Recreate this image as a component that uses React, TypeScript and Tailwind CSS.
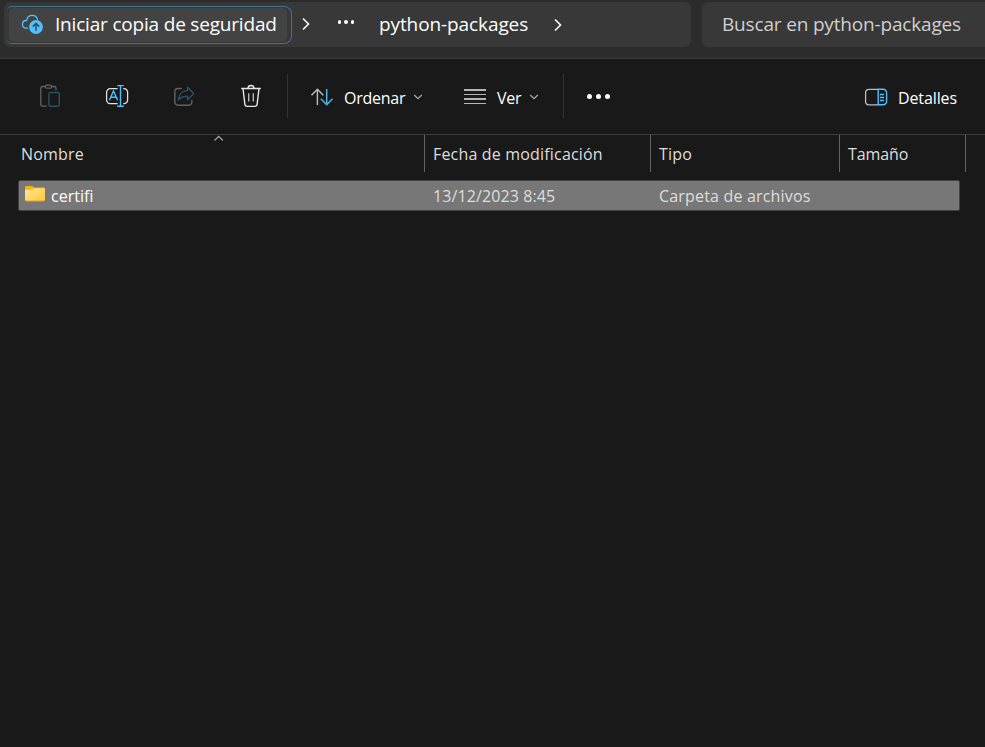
import React from "react";

function BackupIcon() {
  return (
    <svg width="26" height="24" viewBox="20 12 26 24" fill="none" className="-mt-0.5 block">
      <path d="M27.5 28.2H26a3.9 3.9 0 0 1-.4-7.7h1.1c.4-3.1 2.6-5.2 5.5-5.2 2.6 0 4.7 1.6 5.3 4" stroke="#4cc2ff" strokeWidth="1.3" strokeLinecap="round" />
      <circle cx="36" cy="27" r="6.9" fill="#4cc2ff" />
      <path d="M36 30.8v-7.2M32.8 26.6l3.2-3.2 3.2 3.2" stroke="#3b4a55" strokeWidth="1.5" />
    </svg>
  );
}

function Chevron() {
  return (
    <svg width="10" height="14" viewBox="0 0 10 14" fill="none" className="block">
      <path d="M2 1.5 7.5 7 2 12.5" stroke="#f4f4f4" strokeWidth="1.7" />
    </svg>
  );
}

function Down() {
  return (
    <svg width="10" height="8" viewBox="0 0 10 8" fill="none" className="mt-0.5 block">
      <path d="M1.2 2 5 5.6 8.8 2" stroke="#a8a8a8" strokeWidth="1.3" />
    </svg>
  );
}

function PasteIcon() {
  return (
    <svg width="28" height="28" viewBox="36 82 28 28" fill="none" className="block">
      <path d="M46.6 106.2h-4.1a1.7 1.7 0 0 1-1.7-1.7V88.2c0-1 .7-1.7 1.7-1.7h2.8M51.8 86.5h2.5c1 0 1.7.7 1.7 1.7v2" stroke="#636363" strokeWidth="1.3" />
      <rect x="45.2" y="85.2" width="6.6" height="3" rx="1.5" stroke="#636363" strokeWidth="1.2" />
      <rect x="48.9" y="92.5" width="10.4" height="13.7" rx="1.7" stroke="#285467" strokeWidth="1.4" />
    </svg>
  );
}

function RenameIcon() {
  return (
    <svg width="28" height="28" viewBox="103 82 28 28" fill="none" className="block">
      <path d="M117.6 88.6h-7.3a3.7 3.7 0 0 0-3.7 3.7v7.6a3.7 3.7 0 0 0 3.7 3.7h7.3M123.2 88.6h.8a3.6 3.6 0 0 1 3.6 3.7v7.6a3.6 3.6 0 0 1-3.6 3.7h-.8" stroke="#e0e0e0" strokeWidth="1.3" />
      <path d="M109.4 100.3 113.5 91l4.1 9.3M110.8 97.2h5.4M117.2 85.6h6.6M117.2 106.3h6.6M120.5 85.6v20.7" stroke="#4cc2ff" strokeWidth="1.4" />
    </svg>
  );
}

function ShareIcon() {
  return (
    <svg width="28" height="28" viewBox="170 82 28 28" fill="none" className="block">
      <path d="M181.2 88.5H178a3.2 3.2 0 0 0-3.2 3.2v10.4a3.2 3.2 0 0 0 3.2 3.2h10.7a3.2 3.2 0 0 0 3.2-3.2v-1.6" stroke="#636363" strokeWidth="1.4" strokeLinecap="round" />
      <path d="m187.6 87.2 6.1 6.3-6.1 6.3v-3.6c-4-.1-6.8 1-9.2 3.7.3-5.1 3.6-9.1 9.2-9.3v-3.4Z" stroke="#285467" strokeWidth="1.4" strokeLinejoin="round" />
    </svg>
  );
}

function TrashIcon() {
  return (
    <svg width="28" height="28" viewBox="237 82 28 28" fill="none" className="block">
      <path d="M241.2 88.5h19.6M243 88.6l1.9 15.7c.1 1.3 1.1 2.1 2.4 2.1h7.4c1.3 0 2.3-.8 2.4-2.1l1.9-15.7M248 88.3c.1-1.7 1.2-2.8 3-2.8s2.9 1.1 3 2.8" stroke="#e6e6e6" strokeWidth="1.4" />
      <path d="M248.7 93.2v8.3M253.3 93.2v8.3" stroke="#b8b8b8" strokeWidth="1.4" />
    </svg>
  );
}

function SortIcon() {
  return (
    <svg width="26" height="22" viewBox="309 86 26 22" fill="none" className="mt-px block">
      <path d="M317.4 105V89.6M311.5 95.3l5.9-6 5.9 6" stroke="#bdbdbd" strokeWidth="1.4" />
      <path d="M326.7 89v15.4M320.8 98.8l5.9 6 5.9-6" stroke="#4cb4e8" strokeWidth="1.5" />
    </svg>
  );
}

function DetailsIcon() {
  return (
    <svg width="24" height="20" viewBox="864 87 24 20" fill="none" className="mt-px block">
      <path d="M878 89.3h-9a3.4 3.4 0 0 0-3.4 3.4v8.7a3.4 3.4 0 0 0 3.4 3.4h9" stroke="#bdbdbd" strokeWidth="1.3" />
      <path d="M878.2 89.3h5a3.4 3.4 0 0 1 3.4 3.4v8.7a3.4 3.4 0 0 1-3.4 3.4h-5ZM880 94.5h4M880 97.5h4M880 100.5h4" stroke="#4cc2ff" strokeWidth="1.4" />
    </svg>
  );
}

function FolderIcon() {
  return (
    <svg width="20" height="18" viewBox="0 0 20 18" className="-mt-1 block">
      <defs>
        <linearGradient id="folder" x1="0" y1="0" x2="1" y2="1">
          <stop offset="0" stopColor="#ffe69b" />
          <stop offset="1" stopColor="#ffc937" />
        </linearGradient>
      </defs>
      <path d="M0 2.5C0 1.5.6 1 1.5 1h5c.6 0 1 .1 1.4.5L9 2.5h9.5c1 0 1.5.6 1.5 1.5v9H0Z" fill="#f5b316" />
      <path d="M0 6c0-.8.5-1.2 1.3-1.2h5.2c.7 0 1.1-.2 1.6-.7l.8-.8h9.6c.9 0 1.5.5 1.5 1.3v10.2c0 .9-.6 1.4-1.5 1.4h-17C.6 16.2 0 15.7 0 14.8Z" fill="url(#folder)" />
      <path d="M.4 15.4c.3.4.7.5 1.2.5h16.8c.5 0 .9-.1 1.2-.5" stroke="#d89b27" strokeWidth=".7" fill="none" />
    </svg>
  );
}

function AddressBar() {
  return (
    <header className="flex h-[59px] border-b border-[#3d3d3d] bg-[#2c2c2c] pl-1 pt-0.5 text-[19px] leading-[45px] text-white">
      <nav className="flex h-[45px] w-[687px] rounded-md bg-[#383838] pl-[3px] pt-1">
        <div className="h-[38px] w-[285px] rounded-r-lg rounded-l-[5px] border-[1.5px] border-l-0 border-[#3f738e] py-px pl-0.5 pr-1">
          <div className="flex h-[34px] items-center rounded-[5px] bg-[#434343] pl-[11px]">
            <BackupIcon />
            <span className="-mt-0.5 ml-[9px] whitespace-nowrap tracking-[-0.19px]">Iniciar copia de seguridad</span>
          </div>
        </div>
        <div className="ml-[8.5px] mt-[11px] w-[36.5px]"><Chevron /></div>
        <div className="mt-3.5 flex w-[42px] gap-[3px] pl-[0.5px]">
          <i className="size-[3.5px] rounded-full bg-white" />
          <i className="size-[3.5px] rounded-full bg-white" />
          <i className="size-[3.5px] rounded-full bg-white" />
        </div>
        <span className="-mt-1 w-[174px] whitespace-nowrap tracking-[-0.1px]">python-packages</span>
        <div className="mt-[12px]"><Chevron /></div>
      </nav>
      <div className="ml-[11px] h-[45px] grow overflow-hidden whitespace-nowrap rounded-l-md bg-[#383838] pl-5 tracking-[-0.17px] text-[#cfcfcf]">Buscar en python-packages</div>
    </header>
  );
}

function Toolbar() {
  return (
    <div className="flex h-[76px] items-center border-b border-[#3c3c3c] pb-px pl-9 text-[16px] text-white">
      <div className="flex gap-[39px]">
        <PasteIcon />
        <RenameIcon />
        <ShareIcon />
        <TrashIcon />
      </div>
      <div className="ml-[22px] h-[44px] w-px bg-[#333]" />
      <div className="ml-[21px] flex w-[154px] items-center">
        <SortIcon />
        <span className="ml-[9px] w-[69px] pt-1 tracking-[-0.25px]">Ordenar</span>
        <Down />
      </div>
      <div className="flex w-[100px] items-center pl-px">
        <div className="mt-px flex w-[22px] flex-col gap-[3px]">
          <i className="h-[1.5px] bg-[#b5b5b5]" />
          <i className="h-[1.5px] bg-[#b5b5b5]" />
          <i className="h-[1.5px] bg-[#b5b5b5]" />
          <i className="h-[1.5px] bg-[#b5b5b5]" />
        </div>
        <span className="ml-[11px] w-8 pt-1 tracking-[-0.2px]">Ver</span>
        <Down />
      </div>
      <div className="h-[44px] w-px bg-[#333]" />
      <div className="ml-[22.5px] flex gap-1">
        <i className="size-[5px] rounded-full bg-white" />
        <i className="size-[5px] rounded-full bg-white" />
        <i className="size-[5px] rounded-full bg-white" />
      </div>
      <div className="ml-auto flex w-[121px] items-center">
        <DetailsIcon />
        <span className="ml-[10px] pt-1 tracking-[-0.12px]">Detalles</span>
      </div>
    </div>
  );
}

function FileList() {
  return (
    <main className="text-[16px] tracking-[0.18px] text-[#dedede]">
      <div className="flex h-[37px] leading-[38px]">
        <div className="relative w-[425px] border-r border-[#636363] pl-[21px]">
          Nombre
          <svg width="12" height="8" viewBox="0 0 12 8" className="absolute left-[213px] top-0" fill="none">
            <path d="m1.5 5.5 4.2-4.2 4.2 4.2" stroke="#aaa" strokeWidth="1.1" />
          </svg>
        </div>
        <div className="w-[226px] border-r border-[#636363] pl-2">Fecha de modificación</div>
        <div className="w-[189px] border-r border-[#636363] pl-2">Tipo</div>
        <div className="w-[126px] border-r border-[#636363] pl-2 tracking-[-0.1px]">Tamaño</div>
      </div>
      <div className="ml-[18px] mt-2 flex h-[31px] w-[942px] items-center rounded-[2px] border border-[#424242] bg-[#777]">
        <div className="flex w-[414px] items-center pl-1.5 tracking-normal text-white">
          <FolderIcon />
          <span className="ml-1.5">certifi</span>
        </div>
        <div className="w-[226px] tracking-[0.1px]">13/12/2023 8:45</div>
        <div>Carpeta de archivos</div>
      </div>
    </main>
  );
}

export default function App() {
  return (
    <div className="h-[747px] w-[985px] overflow-hidden bg-[#191919] font-['Open_Sans','Noto_Sans',sans-serif]">
      <AddressBar />
      <Toolbar />
      <FileList />
    </div>
  );
}
